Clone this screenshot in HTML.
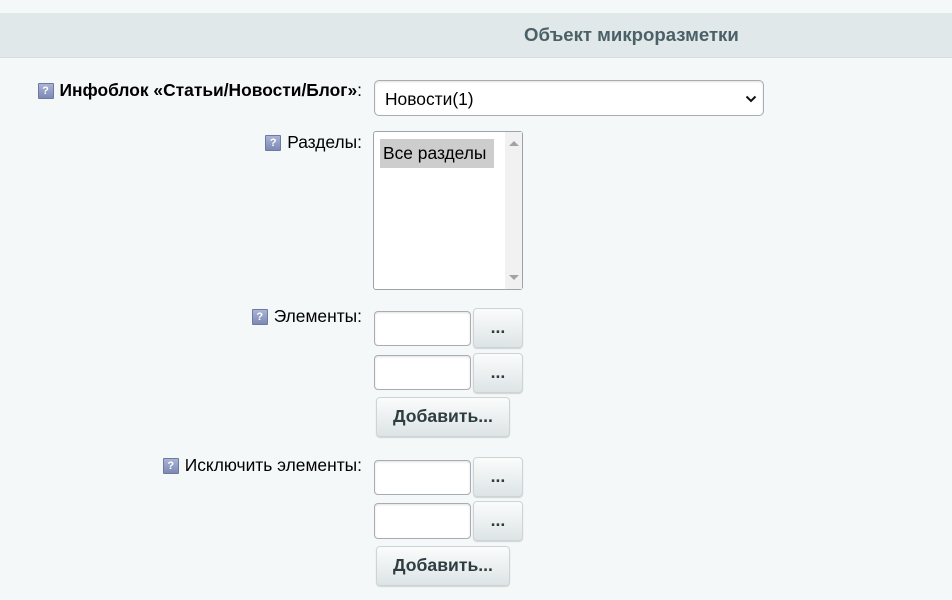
<!DOCTYPE html>
<html><head><meta charset="utf-8"><style>
*{box-sizing:border-box;margin:0;padding:0}
body{width:952px;height:600px;background:#f5f8f9;font-family:"Liberation Sans",Arial,sans-serif;font-size:17.4px;color:#000;position:relative;overflow:hidden}
.hdr{position:absolute;left:0;top:13px;width:952px;height:45px;background:#e0e8ea;border-bottom:1px solid #d5dfe1}
.hdr span{position:absolute;left:524px;top:11px;font-weight:bold;font-size:18.6px;color:#4b6167}
.lbl{position:absolute;right:590px;white-space:nowrap;line-height:20px}
.q{display:inline-block;width:16px;height:16px;background:linear-gradient(#aab4d6,#7d89b4);border:1px solid #6f7aa0;color:#fff;font-size:11px;font-weight:bold;text-align:center;line-height:14px;vertical-align:2px;margin-right:6px;border-radius:1px}
.box{position:absolute;background:#fff;border:1px solid #a8adb3;border-radius:4px;box-shadow:inset 0 1px 2px rgba(0,0,0,.12)}
.btn{position:absolute;background:linear-gradient(#fbfcfc,#dde4e6);border:1px solid #cdd4d6;border-radius:4px;box-shadow:0 1px 1px rgba(0,0,0,.15);font-weight:bold;color:#2e3d42;text-align:center;font-size:17.6px}
</style></head><body>
<div class="hdr"><span>Объект микроразметки</span></div>

<div class="lbl" style="top:80px"><span class="q">?</span><b>Инфоблок «Статьи/Новости/Блог»</b>:</div>
<div class="box" style="left:374px;top:80px;width:390px;height:36px;border-radius:5px">
 <span style="position:absolute;left:10px;top:8px">Новости(1)</span>
 <svg style="position:absolute;right:6px;top:14px" width="12" height="8" viewBox="0 0 12 8"><path d="M1.5 1.5 6 6l4.5-4.5" fill="none" stroke="#111" stroke-width="2"/></svg>
</div>

<div class="lbl" style="top:132px"><span class="q">?</span>Разделы:</div>
<div class="box" style="left:373px;top:131px;width:150px;height:159px;border-radius:3px;box-shadow:none;border-color:#9ea3a8">
 <div style="position:absolute;left:6px;top:7px;width:114px;height:29px;background:#cdcdcd;padding:3px 3px;line-height:22px">Все разделы</div>
 <div style="position:absolute;right:0;top:0;width:17px;height:157px;background:#f1f1f1">
  <div style="position:absolute;left:4px;top:9px;border-left:5px solid transparent;border-right:5px solid transparent;border-bottom:5px solid #a3a3a3"></div>
  <div style="position:absolute;left:4px;bottom:9px;border-left:5px solid transparent;border-right:5px solid transparent;border-top:5px solid #a3a3a3"></div>
 </div>
</div>

<div class="lbl" style="top:306px"><span class="q">?</span>Элементы:</div>
<div class="box" style="left:374px;top:311px;width:97px;height:35px"></div>
<div class="btn" style="left:473px;top:308px;width:50px;height:40px;line-height:36px">...</div>
<div class="box" style="left:374px;top:355px;width:97px;height:35px"></div>
<div class="btn" style="left:473px;top:353px;width:50px;height:40px;line-height:36px">...</div>
<div class="btn" style="left:376px;top:397px;width:134px;height:40px;line-height:37px">Добавить...</div>

<div class="lbl" style="top:455px"><span class="q">?</span>Исключить элементы:</div>
<div class="box" style="left:374px;top:460px;width:97px;height:35px"></div>
<div class="btn" style="left:473px;top:457px;width:50px;height:40px;line-height:36px">...</div>
<div class="box" style="left:374px;top:503px;width:97px;height:36px"></div>
<div class="btn" style="left:473px;top:501px;width:50px;height:40px;line-height:36px">...</div>
<div class="btn" style="left:376px;top:546px;width:134px;height:40px;line-height:37px">Добавить...</div>
</body></html>
